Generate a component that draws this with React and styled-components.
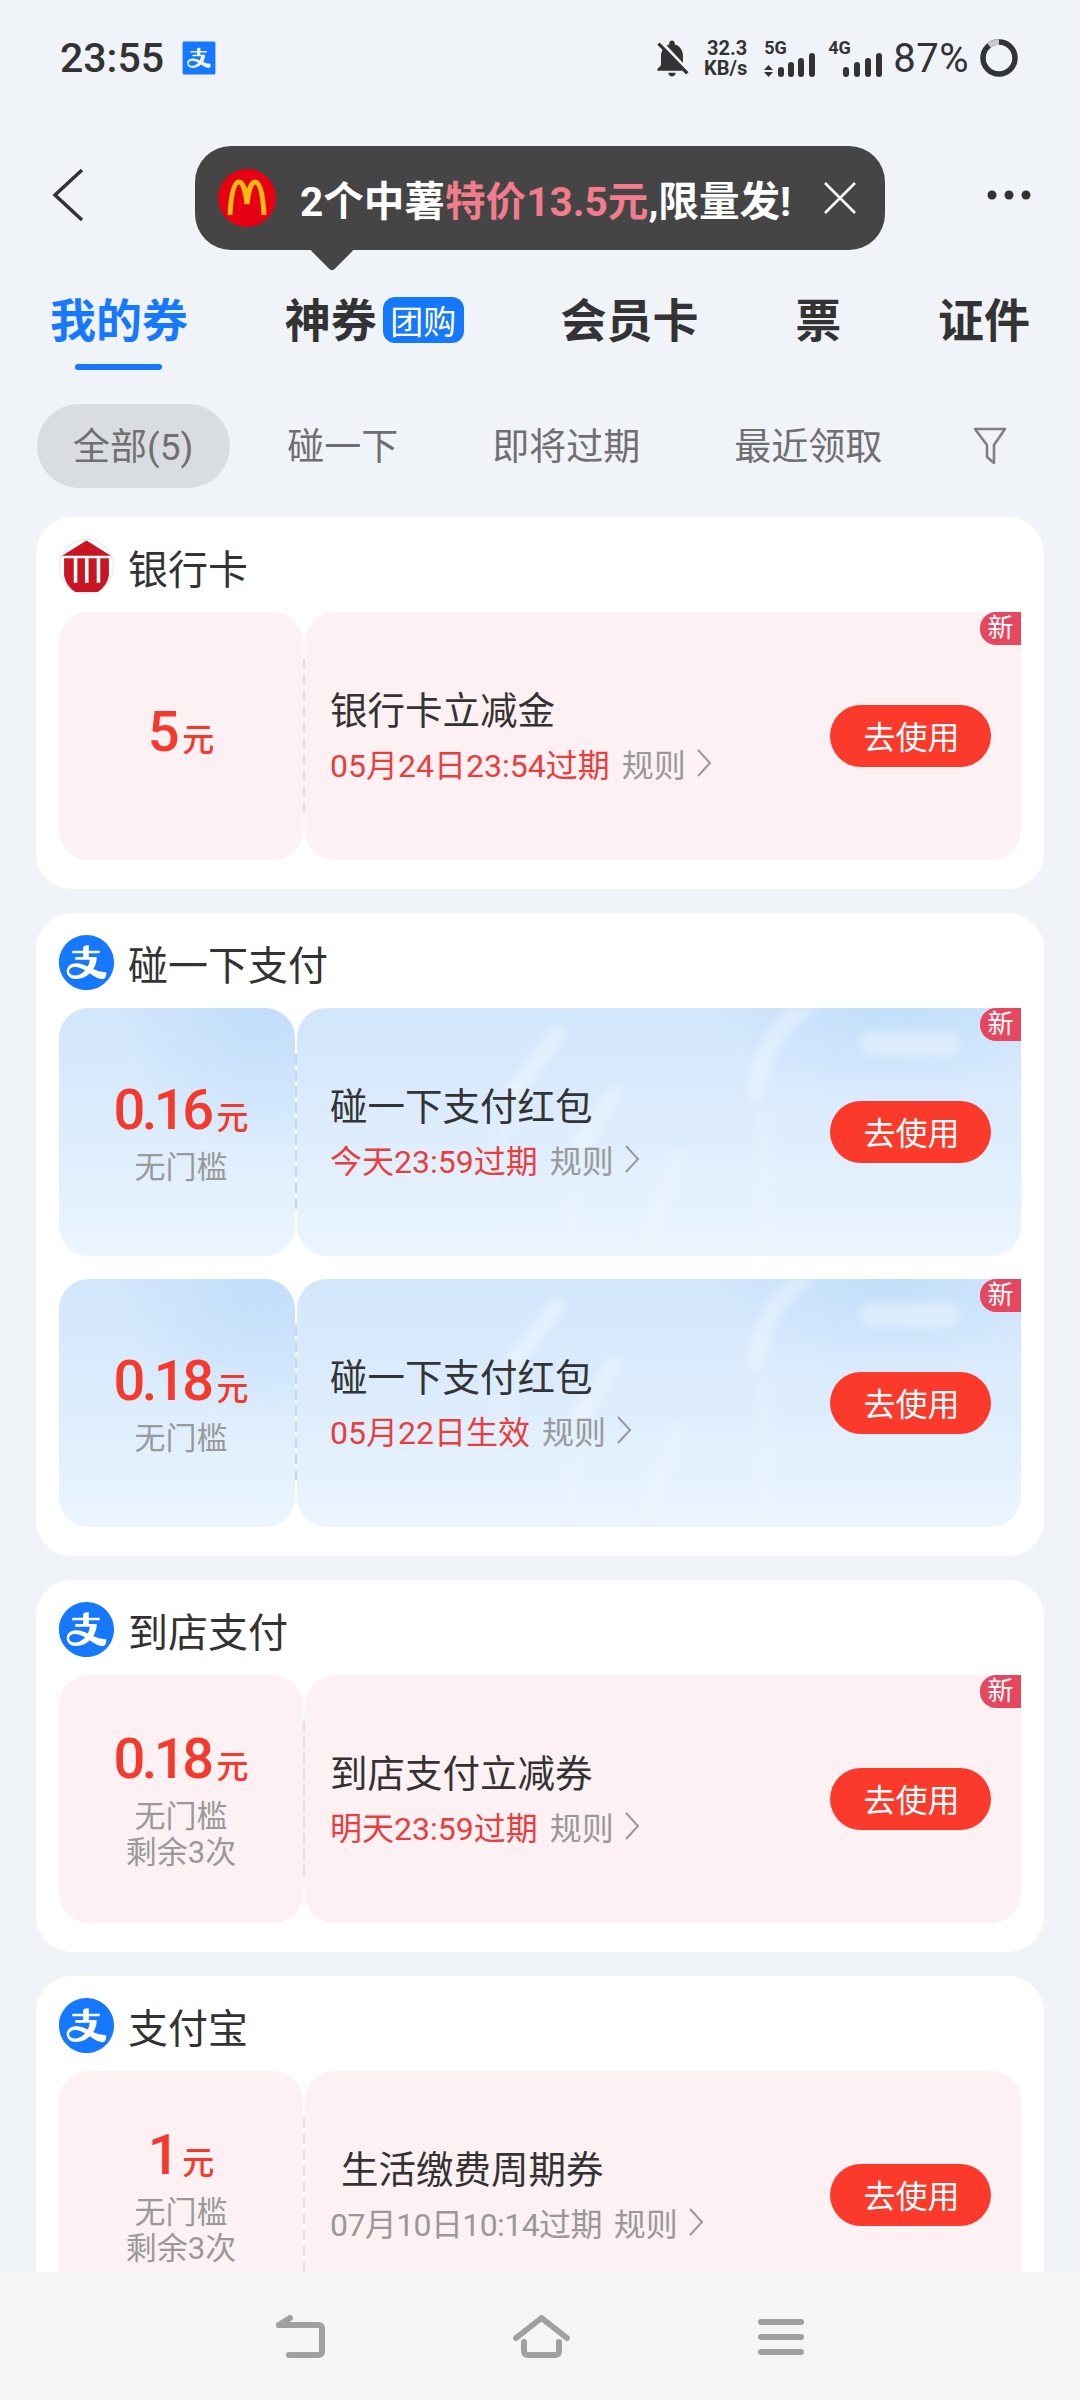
import styled, { createGlobalStyle } from "styled-components";
import { AiFillAlipayCircle, AiFillAlipaySquare } from "react-icons/ai";
import { MdNotificationsOff } from "react-icons/md";

const GlobalStyle = createGlobalStyle`
  html, body { margin: 0; padding: 0; }
  body {
    background: #f0f3f8;
    font-family: Roboto, "Noto Sans CJK SC", sans-serif;
  }
  * { box-sizing: border-box; }
`;

const Page = styled.div`
  position: relative;
  width: 1080px;
  height: 2400px;
  display: flex;
  flex-direction: column;
  overflow: hidden;
  background: #f0f3f8;
`;

const StatusBar = styled.div`
  height: 116px;
  flex: none;
  display: flex;
  align-items: center;
  padding: 0 62px 0 60px;
  color: #333;
`;

const Time = styled.div`
  font-size: 41px;
  font-weight: 500;
  margin-right: 14px;
`;

const StatusRight = styled.div`
  margin-left: auto;
  display: flex;
  align-items: center;
`;

const Speed = styled.div`
  margin-left: -1px;
  width: 54px;
  text-align: right;
  font-size: 20px;
  font-weight: 700;
  line-height: 20px;
`;

const Network = styled.div`
  position: relative;
  width: ${(p) => p.$w}px;
  height: 38px;
  margin-left: ${(p) => p.$ml}px;
  font-size: 18px;
  font-weight: 700;
  line-height: 18px;
`;

const Bars = styled.svg`
  position: absolute;
  right: 0;
  bottom: 0;
`;

const Battery = styled.div`
  font-size: 40px;
  margin: 0 11px 0 10px;
  letter-spacing: 0.5px;
`;

const Header = styled.div`
  position: relative;
  height: 158px;
  flex: none;
  display: flex;
  align-items: center;
  justify-content: space-between;
  padding: 0 49px 0 50px;
`;

const Promo = styled.div`
  position: absolute;
  left: 195px;
  top: 30px;
  width: 690px;
  height: 104px;
  border-radius: 36px;
  background: #454545;
  display: flex;
  align-items: center;
  padding: 0 27px 0 23px;
  color: #fff;
  font-size: 40.6px;
  font-weight: 700;
  white-space: nowrap;
  &::after {
    content: "";
    position: absolute;
    left: 121px;
    bottom: -15px;
    width: 32px;
    height: 32px;
    background: #454545;
    border-radius: 4px;
    transform: rotate(45deg);
  }
`;

const PromoText = styled.div`
  margin-left: 24px;
  flex: 1;
`;

const Hot = styled.span`
  color: #f27b8c;
`;

const Tabs = styled.div`
  height: 98px;
  flex: none;
  display: flex;
  justify-content: space-between;
  padding: 0 50px;
`;

const Tab = styled.div`
  position: relative;
  height: 96px;
  padding-bottom: 10px;
  display: flex;
  align-items: center;
  font-size: 46px;
  font-weight: 700;
  color: ${(p) => (p.$active ? "#1677ff" : "#333")};
  ${(p) =>
    p.$active &&
    `&::after {
      content: "";
      position: absolute;
      left: 25px;
      right: 26px;
      bottom: 0;
      height: 6px;
      border-radius: 3px;
      background: #1677ff;
    }`}
`;

const TabBadge = styled.span`
  margin: 6px 0 0 6px;
  width: 81px;
  height: 46px;
  border-radius: 12px;
  background: #1677ff;
  color: #fff;
  font-size: 33px;
  font-weight: 400;
  display: flex;
  align-items: center;
  justify-content: center;
`;

const Filters = styled.div`
  height: 84px;
  flex: none;
  margin-top: 32px;
  padding-left: 37px;
  display: flex;
  align-items: center;
  gap: 21px;
`;

const Filter = styled.div`
  height: 84px;
  padding: 0 37px 4px 36px;
  border-radius: 42px;
  display: flex;
  align-items: center;
  font-size: 37px;
  color: #6f6f6f;
  background: ${(p) => (p.$active ? "#d9dce1" : "transparent")};
`;

const FunnelIcon = styled.svg`
  margin-left: 33px;
`;

const Cards = styled.div`
  flex: 1;
  min-height: 0;
  overflow: hidden;
  margin-top: 29px;
  padding: 0 36px;
  display: flex;
  flex-direction: column;
  gap: 24px;
`;

const Card = styled.section`
  flex: none;
  background: #fff;
  border-radius: 36px;
  padding: 15px 23px 29px;
  display: flex;
  flex-direction: column;
  gap: 23px;
`;

const CardHead = styled.div`
  height: 72px;
  margin-bottom: -15px;
  padding-bottom: 3px;
  display: flex;
  align-items: center;
  gap: 14px;
  font-size: 40px;
  color: #333;
`;

const IconDisc = styled.div`
  width: 55px;
  height: 55px;
  flex: none;
  border-radius: 50%;
  background: #fff;
  display: flex;
  align-items: center;
  justify-content: center;
  svg {
    flex: none;
  }
`;

const Coupon = styled.div`
  position: relative;
  height: 248px;
  display: flex;
  align-items: stretch;
`;

const blueBody =
  "radial-gradient(ellipse 180px 90px at 82% 0%, #c3dffb 0%, rgba(195, 223, 251, 0) 100%), linear-gradient(180deg, #d2e6fc 0%, #dcecfd 45%, #ebf5ff 100%)";
const blueStub =
  "radial-gradient(circle at 85% 0%, #c2defb 0%, rgba(194, 222, 251, 0) 45%), linear-gradient(180deg, #d2e6fc 0%, #dbecfd 45%, #ebf5ff 100%)";

const Stub = styled.div`
  width: ${(p) => (p.$blue ? 236 : 244)}px;
  flex: none;
  padding-left: ${(p) => (p.$blue ? 8 : 0)}px;
  border-radius: 30px;
  background: ${(p) => (p.$blue ? blueStub : "#fef1f3")};
  display: flex;
  flex-direction: column;
  align-items: center;
  justify-content: center;
`;

const Seam = styled.div`
  width: 2px;
  flex: none;
  align-self: center;
  height: 156px;
  background: repeating-linear-gradient(
    180deg,
    ${(p) => (p.$blue ? "#c4d8ee" : "#f3d9df")} 0 11px,
    transparent 11px 16px
  );
`;

const Amount = styled.div`
  font-size: 56px;
  line-height: 64px;
  font-weight: 500;
  letter-spacing: -3.5px;
  color: #f5392c;
  white-space: nowrap;
`;

const Unit = styled.span`
  font-size: 32px;
  letter-spacing: 0;
  margin-left: 6px;
`;

const Note = styled.div`
  font-size: 31px;
  line-height: 36px;
  color: #999;
`;

const Body = styled.div`
  position: relative;
  flex: 1;
  min-width: 0;
  border-radius: 30px;
  overflow: hidden;
  background: ${(p) => (p.$blue ? blueBody : "#fef1f3")};
  display: flex;
  align-items: center;
  padding: 0 30px 0 ${(p) => (p.$blue ? 33 : 25)}px;
`;

const Swoosh = styled.svg`
  position: absolute;
  left: 0;
  top: 0;
  filter: blur(4px);
`;

const BodyText = styled.div`
  position: relative;
  flex: 1;
  min-width: 0;
`;

const Title = styled.div`
  font-size: 37.5px;
  line-height: 48px;
  color: #333;
  padding-left: ${(p) => (p.$indent ? 11 : 0)}px;
`;

const Meta = styled.div`
  margin-top: 6px;
  height: 44px;
  display: flex;
  align-items: center;
  font-size: 32px;
  color: #999;
  white-space: nowrap;
`;

const Expiry = styled.span`
  color: ${(p) => (p.$muted ? "#999" : "#e83e3e")};
  letter-spacing: ${(p) => (p.$muted ? "-0.6px" : "0")};
  margin-right: 12px;
`;

const RuleArrow = styled.svg`
  margin-left: 10px;
`;

const UseButton = styled.button`
  position: relative;
  width: 161px;
  height: 62px;
  flex: none;
  border: 0;
  border-radius: 31px;
  padding: 0 0 2px 2px;
  background: #fb3a2c;
  color: #fff;
  font-family: inherit;
  font-size: 32px;
`;

const NewTag = styled.div`
  position: absolute;
  right: 0;
  top: 0;
  width: 41px;
  height: 33px;
  border-radius: 16px 0 0 16px;
  background: #e5475f;
  color: #fff;
  font-size: 26px;
  line-height: 33px;
  text-align: center;
`;

const NavBar = styled.nav`
  height: 128px;
  flex: none;
  background: #f5f5f5;
  display: flex;
  align-items: center;
  padding: 2px 0 0 275px;
  gap: 188px;
`;

const Chevron = () => (
  <RuleArrow width="16" height="30" viewBox="0 0 16 30" fill="none">
    <path d="M2 2 L14 15 L2 28" stroke="#999" strokeWidth="2" />
  </RuleArrow>
);

const BankIcon = () => (
  <svg width="55" height="55" viewBox="0 0 54 54" style={{ flex: "none" }}>
    <circle cx="27" cy="27" r="26.5" fill="#fff" stroke="#e6e6e6" />
    <path d="M3 16.5 L27 1.5 L51 16.5 Z" fill="#c91424" />
    <path d="M5 19 H49 V36 Q47 46 38 52 H16 Q7 46 5 36 Z" fill="#c91424" />
    <path d="M14.5 19 h3.5 v24 h-3.5z M25.5 19 h3.5 v24 h-3.5z M37 19 h3.5 v24 h-3.5z" fill="#fff" />
  </svg>
);

const AlipayDisc = () => (
  <IconDisc>
    <AiFillAlipayCircle size={63} color="#1677ff" />
  </IconDisc>
);

const BlueSwoosh = () => (
  <Swoosh width="724" height="248" viewBox="0 0 724 248" fill="none">
    <g stroke="#fff" strokeLinecap="round">
      <path d="M511 -4 Q464 30 459 84" strokeWidth="19" strokeOpacity="0.32" />
      <path d="M468 108 V250" strokeWidth="20" strokeOpacity="0.14" />
      <path d="M261 26 L218 82" strokeWidth="17" strokeOpacity="0.34" />
      <path d="M218 82 L195 170" strokeWidth="17" strokeOpacity="0.12" />
      <path d="M317 86 L284 136" strokeWidth="18" strokeOpacity="0.26" />
      <path d="M284 136 L270 240" strokeWidth="18" strokeOpacity="0.1" />
      <path d="M383 150 L350 232" strokeWidth="18" strokeOpacity="0.2" />
    </g>
    <rect x="563" y="24" width="99" height="24" rx="11" fill="#fff" fillOpacity="0.36" />
  </Swoosh>
);

const CouponRow = ({ blue, amount, notes = [], title, indent, expiry, muted, isNew }) => (
  <Coupon>
    <Stub $blue={blue}>
      <Amount>
        {amount}
        <Unit>元</Unit>
      </Amount>
      {notes.map((n) => (
        <Note key={n}>{n}</Note>
      ))}
    </Stub>
    <Seam $blue={blue} />
    <Body $blue={blue}>
      {blue && <BlueSwoosh />}
      <BodyText>
        <Title $indent={indent}>{title}</Title>
        <Meta>
          <Expiry $muted={muted}>{expiry}</Expiry>
          规则
          <Chevron />
        </Meta>
      </BodyText>
      <UseButton>去使用</UseButton>
    </Body>
    {isNew && <NewTag>新</NewTag>}
  </Coupon>
);

export default function App() {
  return (
    <Page>
      <GlobalStyle />
      <StatusBar>
        <Time>23:55</Time>
        <AiFillAlipaySquare size={42} color="#1677ff" />
        <StatusRight>
          <MdNotificationsOff size={44} color="#333" />
          <Speed>
            32.3
            <br />
            KB/s
          </Speed>
          <Network $w={53} $ml={17}>
            5G
            <Bars width="53" height="24" viewBox="0 0 53 24" fill="#333">
              <path d="M4.5 12 L9 17 H0 Z M4.5 24 L0 19 H9 Z" />
              <rect x="14" y="14" width="6" height="10" rx="3" />
              <rect x="24" y="9" width="6" height="15" rx="3" />
              <rect x="34" y="5" width="6" height="19" rx="3" />
              <rect x="45" y="0" width="6" height="24" rx="3" />
            </Bars>
          </Network>
          <Network $w={55} $ml={11}>
            4G
            <Bars width="40" height="24" viewBox="0 0 40 24" fill="#333">
              <rect x="0" y="14" width="6" height="10" rx="3" />
              <rect x="11" y="9" width="6" height="15" rx="3" />
              <rect x="22" y="5" width="6" height="19" rx="3" />
              <rect x="33" y="0" width="6" height="24" rx="3" />
            </Bars>
          </Network>
          <Battery>87%</Battery>
          <svg width="38" height="38" viewBox="0 0 38 38" fill="none">
            <circle cx="19" cy="19" r="16" stroke="#333" strokeWidth="5.5" />
            <path d="M19 3 A16 16 0 0 0 9 6.5" stroke="#c9c9c9" strokeWidth="5.5" />
          </svg>
        </StatusRight>
      </StatusBar>

      <Header>
        <svg width="36" height="54" viewBox="0 0 36 54" fill="none">
          <path d="M32 2 L5 27 L32 52" stroke="#333" strokeWidth="3.5" />
        </svg>
        <svg width="44" height="10" viewBox="0 0 44 10" fill="#333">
          <circle cx="5" cy="5" r="4.5" />
          <circle cx="22" cy="5" r="4.5" />
          <circle cx="39" cy="5" r="4.5" />
        </svg>
        <Promo>
          <svg width="58" height="58" viewBox="0 0 58 58" fill="none" style={{ flex: "none" }}>
            <circle cx="29" cy="29" r="29" fill="#e60012" />
            <path
              d="M12 46 C13 24 16 13 21 13 C25 13 28 24 29 35 C30 24 33 13 37 13 C42 13 45 24 46 46"
              stroke="#fdb913"
              strokeWidth="5"
            />
          </svg>
          <PromoText>
            2个中薯<Hot>特价13.5元</Hot>,限量发!
          </PromoText>
          <svg width="36" height="36" viewBox="0 0 36 36" fill="none" style={{ flex: "none" }}>
            <path d="M3 3 L33 33 M33 3 L3 33" stroke="#fff" strokeWidth="2.5" />
          </svg>
        </Promo>
      </Header>

      <Tabs>
        <Tab $active>我的券</Tab>
        <Tab>
          神券<TabBadge>团购</TabBadge>
        </Tab>
        <Tab>会员卡</Tab>
        <Tab>票</Tab>
        <Tab>证件</Tab>
      </Tabs>

      <Filters>
        <Filter $active>全部(5)</Filter>
        <Filter>碰一下</Filter>
        <Filter>即将过期</Filter>
        <Filter>最近领取</Filter>
        <FunnelIcon width="34" height="38" viewBox="0 0 34 38" fill="none">
          <path d="M2 2 H32 L21 18 V36 L14 30 V18 Z" stroke="#808080" strokeWidth="2.6" strokeLinejoin="round" />
        </FunnelIcon>
      </Filters>

      <Cards>
        <Card>
          <CardHead>
            <BankIcon />
            银行卡
          </CardHead>
          <CouponRow amount="5" title="银行卡立减金" expiry="05月24日23:54过期" isNew />
        </Card>
        <Card>
          <CardHead>
            <AlipayDisc />
            碰一下支付
          </CardHead>
          <CouponRow blue amount="0.16" notes={["无门槛"]} title="碰一下支付红包" expiry="今天23:59过期" isNew />
          <CouponRow blue amount="0.18" notes={["无门槛"]} title="碰一下支付红包" expiry="05月22日生效" isNew />
        </Card>
        <Card>
          <CardHead>
            <AlipayDisc />
            到店支付
          </CardHead>
          <CouponRow amount="0.18" notes={["无门槛", "剩余3次"]} title="到店支付立减券" expiry="明天23:59过期" isNew />
        </Card>
        <Card>
          <CardHead>
            <AlipayDisc />
            支付宝
          </CardHead>
          <CouponRow amount="1" notes={["无门槛", "剩余3次"]} title="生活缴费周期券" indent muted expiry="07月10日10:14过期" />
        </Card>
      </Cards>

      <NavBar>
        <svg width="50" height="44" viewBox="0 0 50 44" fill="none" stroke="#a0a0a0" strokeWidth="6" strokeLinecap="round" strokeLinejoin="round">
          <path d="M4 10 H43 Q47 10 47 14 V36 Q47 40 43 40 H14" />
          <path d="M4 10 L15 3" />
        </svg>
        <svg width="57" height="44" viewBox="0 0 57 44" fill="none" stroke="#a0a0a0" strokeWidth="6" strokeLinecap="round" strokeLinejoin="round">
          <path d="M3 23 L28.5 3 L54 23" />
          <path d="M11 27 V36 Q11 40 15 40 H42 Q46 40 46 36 V27" />
        </svg>
        <svg width="46" height="44" viewBox="0 0 46 44" fill="#a0a0a0">
          <rect x="0" y="4" width="46" height="6" rx="3" />
          <rect x="0" y="19" width="46" height="6" rx="3" />
          <rect x="0" y="34" width="46" height="6" rx="3" />
        </svg>
      </NavBar>
    </Page>
  );
}
